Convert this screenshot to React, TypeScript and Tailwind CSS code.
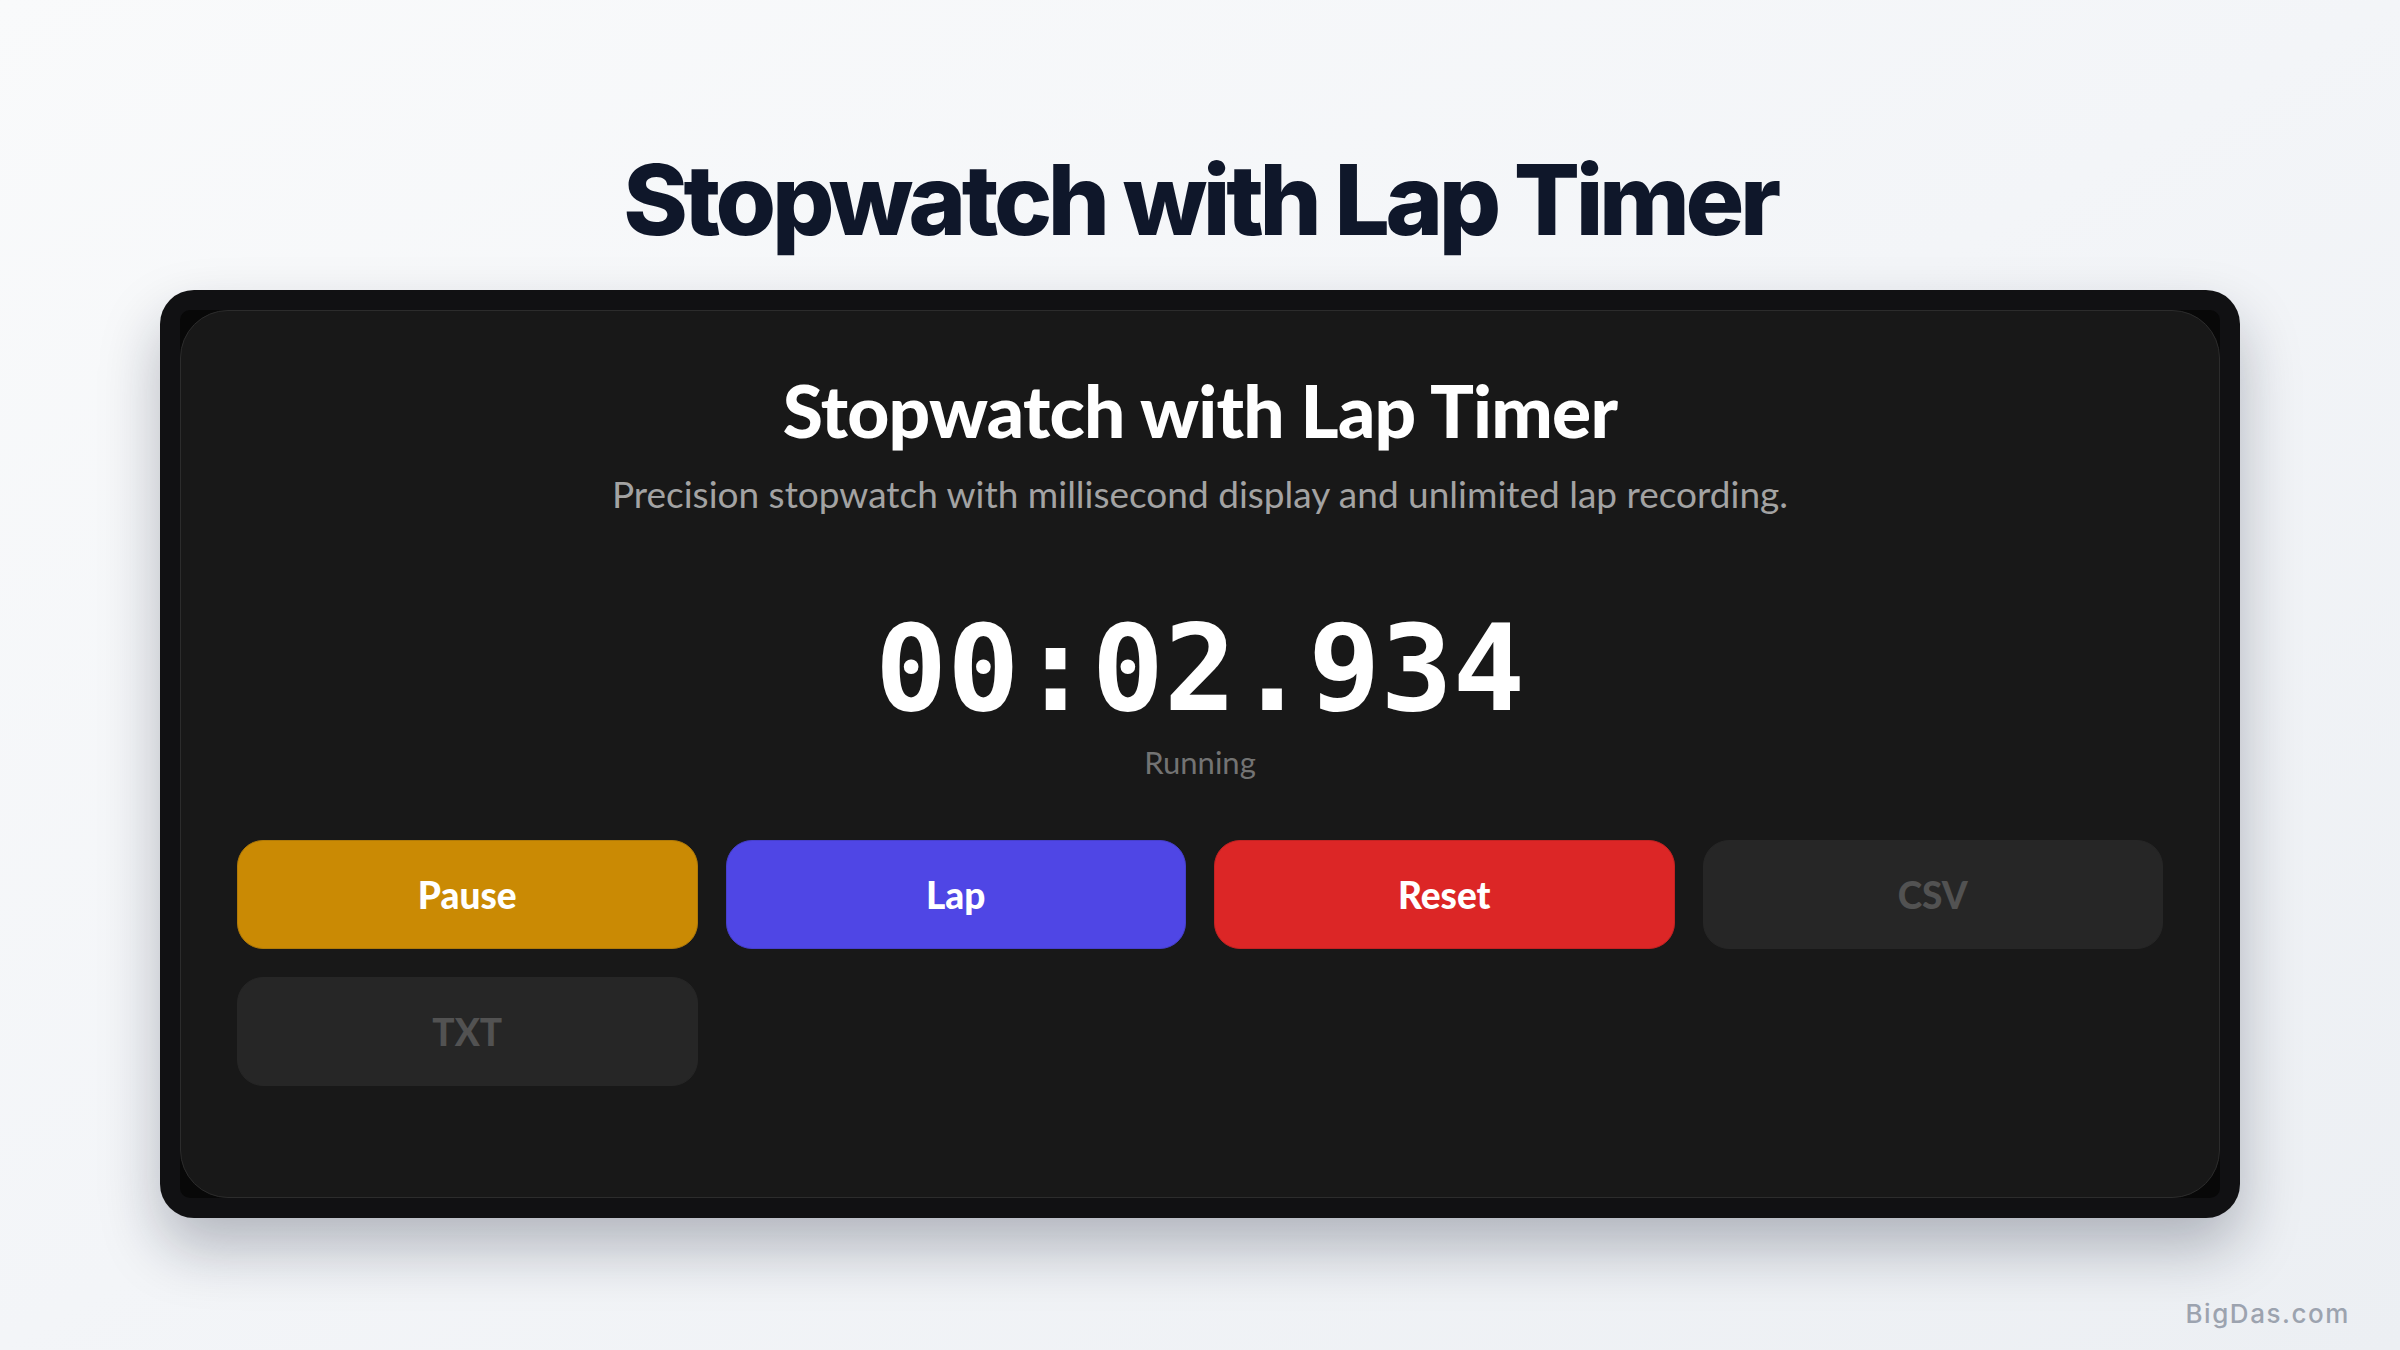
import React from 'react';

type Btn = { label: string; className: string };

const buttons: Btn[] = [
  { label: 'Pause', className: 'bg-[#ca8a04] text-white border-[#b07a08]' },
  { label: 'Lap', className: 'bg-[#4f46e5] text-white border-[#463fcc]' },
  { label: 'Reset', className: 'bg-[#dc2626] text-white border-[#c22222]' },
  { label: 'CSV', className: 'bg-[#262626] text-[#525252] border-[#262626]' },
  { label: 'TXT', className: 'bg-[#262626] text-[#525252] border-[#262626]' },
];

export default function App() {
  return (
    <div className="min-h-screen w-full bg-gradient-to-br from-[#f9fafb] via-[#f3f5f8] to-[#eceff3] flex flex-col items-center relative">
      <h1
        className="mt-[140px] text-[#0f172a] text-[98px] leading-[120px] font-extrabold tracking-[-0.045em]"
        style={{ fontFamily: 'Inter, "Noto Sans", sans-serif' }}
      >
        Stopwatch with Lap Timer
      </h1>

      <div className="mt-[30px] w-[2080px] h-[928px] bg-[#111113] rounded-[34px] p-[20px] shadow-[0_30px_60px_rgba(15,23,42,0.28)]">
        <div className="w-full h-full bg-[#080808] rounded-[10px]">
          <div
            className="w-full h-full rounded-[48px] border border-[#2c2c2c] bg-[#181818] px-[56px] flex flex-col items-center"
            style={{ fontFamily: 'Lato, "Noto Sans", sans-serif' }}
          >
            <h2 className="mt-[54px] text-white text-[73px] leading-[90px] font-black tracking-[-0.01em]">
              Stopwatch with Lap Timer
            </h2>
            <p className="mt-[15px] text-[#a3a3a3] text-[37px] leading-[48px]">
              Precision stopwatch with millisecond display and unlimited lap recording.
            </p>

            <div
              className="mt-[86px] text-white text-[120px] leading-[130px] font-bold"
              style={{ fontFamily: '"DejaVu Sans Mono", "Liberation Mono", monospace' }}
            >
              00:02.934
            </div>
            <div className="mt-[8px] text-[#737373] text-[31px] leading-[40px]">Running</div>

            <div className="mt-[58px] w-full grid grid-cols-4 gap-[28px]">
              {buttons.map((b) => (
                <button
                  key={b.label}
                  className={`h-[109px] rounded-[26px] border text-[37px] font-black ${b.className}`}
                >
                  {b.label}
                </button>
              ))}
            </div>
          </div>
        </div>
      </div>

      <div
        className="absolute right-[50px] bottom-[17px] text-[#9ca3af] text-[26px] font-medium tracking-[0.06em]"
        style={{ fontFamily: 'Inter, sans-serif' }}
      >
        BigDas.com
      </div>
    </div>
  );
}
